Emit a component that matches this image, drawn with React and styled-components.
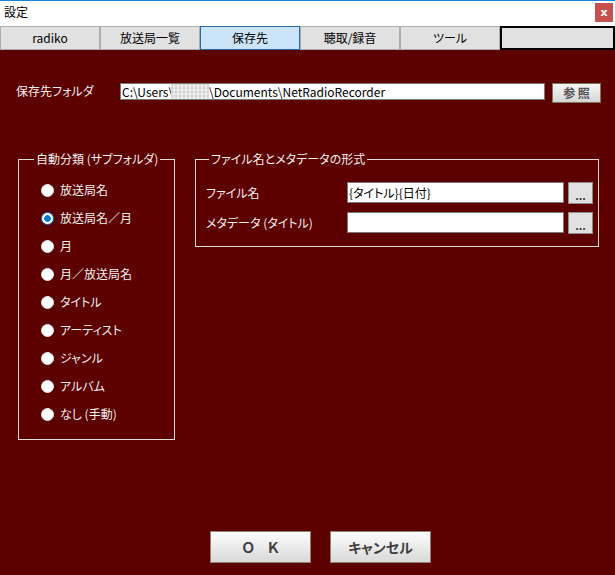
import React from 'react';
import styled, { createGlobalStyle } from 'styled-components';

const Global = createGlobalStyle`
  html, body { margin: 0; padding: 0; background: #5c0000; }
  body {
    font-family: "Noto Sans CJK JP", "Noto Sans", sans-serif;
    font-size: 12px;
    font-feature-settings: "palt" 1;
  }
  * { box-sizing: border-box; }
`;

const Window = styled.div`
  width: 615px;
  height: 575px;
  display: flex;
  flex-direction: column;
  background: #5c0000;
  overflow: hidden;
`;

const TitleBar = styled.div`
  height: 26px;
  border-top: 1px solid #1883d7;
  background: #ffffff;
  display: flex;
  align-items: flex-start;
  justify-content: space-between;
  padding: 0 2px 0 4px;
`;

const Title = styled.span`
  font-size: 12px;
  line-height: 16px;
  margin-top: 3px;
  color: #000;
`;

const CloseButton = styled.div`
  width: 18px;
  height: 19px;
  margin-top: 2px;
  background: #c75050;
  color: #fff;
  font-family: "DejaVu Sans", sans-serif;
  font-weight: 700;
  font-size: 11px;
  line-height: 17px;
  display: flex;
  align-items: center;
  justify-content: center;
`;

const TabBar = styled.div`
  height: 24px;
  display: flex;
  background: #5c0000;
`;

const Tab = styled.div`
  width: 100px;
  height: 24px;
  border: 1px solid ${p => (p.$active ? '#2a67a8' : '#adadad')};
  background: ${p => (p.$active ? '#cce4f7' : '#e1e1e1')};
  color: #000;
  font-size: 12px;
  line-height: 16px;
  display: flex;
  align-items: center;
  justify-content: center;
`;

const BlankTab = styled.div`
  flex: 1;
  height: 24px;
  border: 2px solid #000;
  background: #e1e1e1;
`;

const Content = styled.div`
  flex: 1;
  display: flex;
  flex-direction: column;
  color: #f0f0f0;
`;

const FolderRow = styled.div`
  display: flex;
  align-items: flex-start;
  padding: 33px 0 0 16px;
`;

const RowLabel = styled.span`
  width: ${p => p.$w}px;
  flex-shrink: 0;
  font-size: 12px;
  line-height: 16px;
  margin-top: ${p => p.$top || 0}px;
  color: #f0f0f0;
`;

const PathField = styled.div`
  width: 425px;
  height: 17px;
  border: 1px solid #7a7a7a;
  background: #fff;
  color: #000;
  font-size: 12px;
  line-height: 15px;
  padding-left: 1px;
  white-space: nowrap;
  overflow: hidden;
  display: flex;
  align-items: center;
`;

const Redacted = styled.span`
  display: inline-block;
  width: 38px;
  height: 15px;
  margin-left: -2px;
  background:
    repeating-linear-gradient(0deg, rgba(255,255,255,0.35) 0 2px, rgba(0,0,0,0) 2px 4px),
    repeating-linear-gradient(90deg, #cfcfcf 0 2px, #e6e6e6 2px 4px);
`;

const BrowseButton = styled.div`
  width: 49px;
  height: 20px;
  margin-left: 7px;
  border: 1px solid #7b7560;
  background: linear-gradient(#f6f6f6, #d6d6d6);
  color: #505050;
  font-size: 12px;
  font-weight: 700;
  line-height: 18px;
  text-align: center;
  white-space: pre;
`;

const GroupsRow = styled.div`
  display: flex;
  align-items: flex-start;
  gap: 20px;
  padding-left: 18px;
  margin-top: 48px;
`;

const Group = styled.fieldset`
  margin: 0;
  padding: 0;
  min-width: 0;
  width: ${p => p.$w}px;
  border: 1px solid #dcdcdc;
`;

const Legend = styled.legend`
  margin-left: ${p => p.$offset}px;
  padding: 0 2px;
  font-size: 12px;
  line-height: 16px;
  color: #f0f0f0;
`;

const RadioList = styled.div`
  display: flex;
  flex-direction: column;
  padding: 9px 0 11px 22px;
`;

const RadioRow = styled.label`
  height: 28px;
  display: flex;
  align-items: center;
  gap: 6px;
  font-size: 12px;
  line-height: 16px;
  color: #f0f0f0;
`;

const Radio = styled.input.attrs({ type: 'radio' })`
  appearance: none;
  margin: 0;
  width: 13px;
  height: 13px;
  border-radius: 50%;
  border: 1px solid ${p => (p.checked ? '#0078d7' : '#e8e8e8')};
  background: ${p =>
    p.checked
      ? 'radial-gradient(circle, #0078d7 0 3px, #ffffff 3.5px)'
      : '#ffffff'};
`;

const FormatList = styled.div`
  display: flex;
  flex-direction: column;
  gap: 8px;
  padding: 15px 0 12px 10px;
`;

const FormatRow = styled.div`
  display: flex;
  align-items: flex-start;
  height: 22px;
`;

const TextField = styled.input`
  width: 217px;
  height: 21px;
  margin: 0;
  border: 1px solid #7a7a7a;
  background: #fff;
  color: #000;
  font-family: "Noto Sans CJK JP", "Noto Sans", sans-serif;
  font-feature-settings: "palt" 1;
  font-size: 12px;
  padding: 0 0 0 1px;
  outline: none;
`;

const DotsButton = styled.div`
  width: 25px;
  height: 22px;
  margin-left: 4px;
  border: 1px solid #8c8c8c;
  background: #e1e1e1;
  color: #333;
  font-size: 11px;
  font-weight: 700;
  line-height: 22px;
  text-align: center;
  padding-top: 1px;
`;

const ButtonBar = styled.div`
  margin-top: auto;
  display: flex;
  gap: 19px;
  padding: 0 0 12px 210px;
`;

const DialogButton = styled.div`
  width: 101px;
  height: 32px;
  border: 1px solid #8b8470;
  background: linear-gradient(#fdfdfd, #d9d9d9);
  color: #3f3f3f;
  font-size: 14px;
  font-weight: 700;
  letter-spacing: ${p => (p.$spaced ? '5px' : '0')};
  padding-left: ${p => (p.$spaced ? '5px' : '0')};
  display: flex;
  align-items: center;
  justify-content: center;
  white-space: pre;
`;

const tabs = ['radiko', '放送局一覧', '保存先', '聴取/録音', 'ツール'];
const options = [
  '放送局名',
  '放送局名／月',
  '月',
  '月／放送局名',
  'タイトル',
  'アーティスト',
  'ジャンル',
  'アルバム',
  'なし (手動)',
];

export default function App() {
  return (
    <>
      <Global />
      <Window>
        <TitleBar>
          <Title>設定</Title>
          <CloseButton>x</CloseButton>
        </TitleBar>
        <TabBar>
          {tabs.map(t => (
            <Tab key={t} $active={t === '保存先'}>{t}</Tab>
          ))}
          <BlankTab />
        </TabBar>
        <Content>
          <FolderRow>
            <RowLabel $w={104} $top={0}>保存先フォルダ</RowLabel>
            <PathField>
              <span>C:\Users\</span>
              <Redacted />
              <span>\Documents\NetRadioRecorder</span>
            </PathField>
            <BrowseButton>{'参 照'}</BrowseButton>
          </FolderRow>
          <GroupsRow>
            <Group $w={157}>
              <Legend $offset={15}>自動分類 (サブフォルダ)</Legend>
              <RadioList>
                {options.map(o => (
                  <RadioRow key={o}>
                    <Radio name="sub" checked={o === '放送局名／月'} readOnly />
                    {o}
                  </RadioRow>
                ))}
              </RadioList>
            </Group>
            <Group $w={404}>
              <Legend $offset={13}>ファイル名とメタデータの形式</Legend>
              <FormatList>
                <FormatRow>
                  <RowLabel $w={141} $top={3}>ファイル名</RowLabel>
                  <TextField defaultValue="{タイトル}{日付}" />
                  <DotsButton>...</DotsButton>
                </FormatRow>
                <FormatRow>
                  <RowLabel $w={141} $top={3}>メタデータ (タイトル)</RowLabel>
                  <TextField defaultValue="" />
                  <DotsButton>...</DotsButton>
                </FormatRow>
              </FormatList>
            </Group>
          </GroupsRow>
          <ButtonBar>
            <DialogButton $spaced>{'Ｏ Ｋ'}</DialogButton>
            <DialogButton>キャンセル</DialogButton>
          </ButtonBar>
        </Content>
      </Window>
    </>
  );
}
